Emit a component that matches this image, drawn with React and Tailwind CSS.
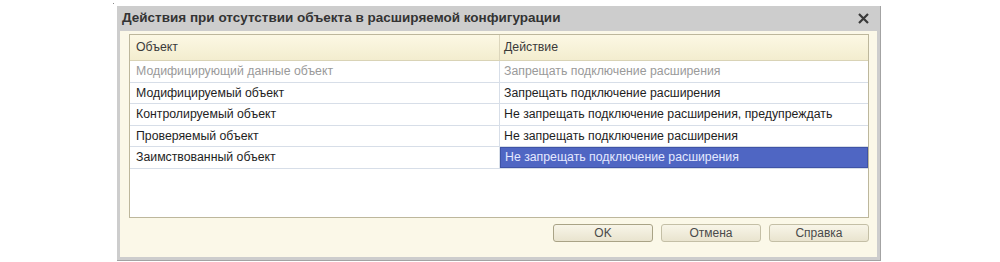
import React from "react";

const rows = [
  { obj: "Модифицирующий данные объект", act: "Запрещать подключение расширения", muted: true, h: "h-[22px]" },
  { obj: "Модифицируемый объект", act: "Запрещать подключение расширения", h: "h-[21px]" },
  { obj: "Контролируемый объект", act: "Не запрещать подключение расширения, предупреждать", h: "h-[22px]" },
  { obj: "Проверяемый объект", act: "Не запрещать подключение расширения", h: "h-[21px]" },
  { obj: "Заимствованный объект", act: "Не запрещать подключение расширения", selected: true, h: "h-[22px]" },
];

function Button({ children, primary }) {
  return (
    <button
      className={`w-[100px] h-[18px] rounded-[3px] border text-[12px] text-[#4a4a4a] leading-none bg-gradient-to-b from-[#f8f5e8] to-[#e9e4cf] ${
        primary ? "border-[#a9a386]" : "border-[#c4bfa6]"
      }`}
    >
      {children}
    </button>
  );
}

export default function App() {
  return (
    <div
      className="w-[1000px] h-[262px] bg-white overflow-hidden relative"
      style={{ fontFamily: '"Liberation Sans", Arial, sans-serif' }}
    >
      <div className="absolute left-[113px] top-[3px] w-px h-px bg-[#888]" />

      <div className="ml-[117px] pt-[6px] w-[764px]">
        <div className="flex flex-col h-[255px] border-r border-b border-[#a3a3a3]">
          {/* title bar */}
          <div className="h-[25px] bg-[#cdcdcd] flex items-center justify-between pl-[5px] pr-[11px]">
            <span className="text-[13.5px] font-bold text-[#333]">
              Действия при отсутствии объекта в расширяемой конфигурации
            </span>
            <svg width="11" height="11" viewBox="0 0 11 11">
              <path d="M1 1L10 10M10 1L1 10" stroke="#3a3a3a" strokeWidth="2.2" />
            </svg>
          </div>

          {/* body */}
          <div className="flex-1 flex flex-col bg-[#fbf8e8] border-l-[3px] border-r-[3px] border-b-[3px] border-[#cdcdcd] pl-[9px] pr-[8px] pt-[3px]">
            <div className="h-[184px] border border-[#bdb79c] bg-white flex flex-col">
              <div className="h-[26px] flex bg-gradient-to-b from-[#fcf8e4] to-[#f3edcf] border-b border-[#d9d3b6] text-[12.3px] text-[#3a3a3a]">
                <div className="w-[370px] flex items-center pl-[6px] border-r border-[#dcd6bc]">Объект</div>
                <div className="flex-1 flex items-center pl-[4px]">Действие</div>
              </div>
              {rows.map((r, i) => (
                <div key={i} className={`${r.h} flex border-b border-[#d7dee8] text-[12.3px]`}>
                  <div
                    className={`w-[370px] flex items-center pl-[6px] border-r border-[#d7dee8] ${
                      r.muted ? "text-[#9a9a9a]" : "text-[#1e1e1e]"
                    }`}
                  >
                    {r.obj}
                  </div>
                  <div
                    className={`flex-1 flex items-center pl-[4px] ${
                      r.selected
                        ? "bg-[#4f66c3] text-[#e4e9ff] border border-[#3f53a6]"
                        : r.muted
                        ? "text-[#9a9a9a]"
                        : "text-[#1e1e1e]"
                    }`}
                  >
                    {r.act}
                  </div>
                </div>
              ))}
            </div>

            <div className="flex justify-end gap-[8px] mt-[6px]">
              <Button primary>OK</Button>
              <Button>Отмена</Button>
              <Button>Справка</Button>
            </div>
          </div>
        </div>
      </div>
    </div>
  );
}
